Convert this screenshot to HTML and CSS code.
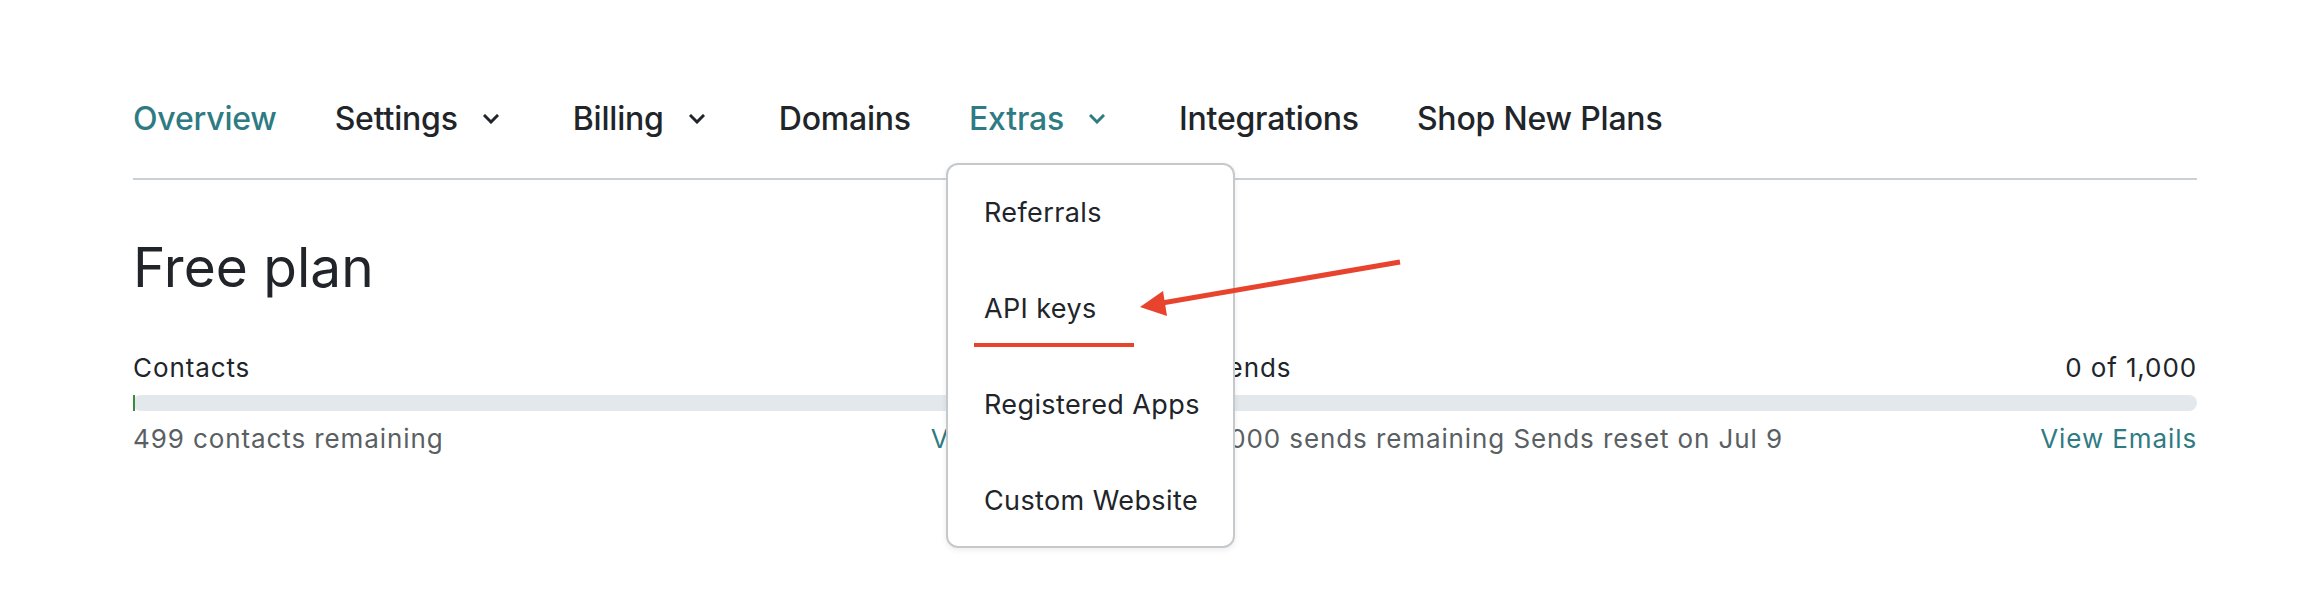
FILE: index.html
```html
<!DOCTYPE html>
<html lang="en">
<head>
<meta charset="utf-8">
<title>Account overview</title>
<link rel="stylesheet" href="styles.css">
</head>
<body>
<div class="page">
  <nav class="tabs">
    <a class="tab active">Overview</a>
    <a class="tab has-menu">Settings
      <svg class="chev" viewBox="0 0 16 10" width="16" height="10"><polyline points="2,2 8,8 14,2"/></svg>
    </a>
    <a class="tab has-menu">Billing
      <svg class="chev" viewBox="0 0 16 10" width="16" height="10"><polyline points="2,2 8,8 14,2"/></svg>
    </a>
    <a class="tab">Domains</a>
    <div class="tab has-menu active open">Extras
      <svg class="chev" viewBox="0 0 16 10" width="16" height="10"><polyline points="2,2 8,8 14,2"/></svg>
      <ul class="menu">
        <li class="menu-item">Referrals</li>
        <li class="menu-item">API keys<span class="mark"></span></li>
        <li class="menu-item">Registered Apps</li>
        <li class="menu-item">Custom Website</li>
      </ul>
    </div>
    <a class="tab">Integrations</a>
    <a class="tab">Shop New Plans</a>
  </nav>

  <h1 class="plan">Free plan</h1>

  <div class="stats">
    <section class="stat">
      <div class="stat-head"><span>Contacts</span><span>1 of 500</span></div>
      <div class="bar"><div class="fill"></div></div>
      <div class="stat-foot"><span class="muted">499 contacts remaining</span><a class="link">View Contacts</a></div>
    </section>
    <section class="stat">
      <div class="stat-head"><span>Sends</span><span>0 of 1,000</span></div>
      <div class="bar"></div>
      <div class="stat-foot"><span class="muted">1,000 sends remaining Sends reset on Jul 9</span><a class="link">View Emails</a></div>
    </section>
  </div>

  <svg class="arrow" viewBox="0 0 280 75" width="280" height="75">
    <line x1="270" y1="12" x2="32" y2="53"/>
    <polygon points="10,57 33,41 37,66"/>
  </svg>
</div>
</body>
</html>
```
FILE: styles.css
```css
html, body {
  margin: 0;
  padding: 0;
  background: #ffffff;
}

body {
  font-family: Inter, "Noto Sans", "Liberation Sans", sans-serif;
  color: #21252a;
}

.page {
  position: relative;
  width: 2320px;
  height: 614px;
  padding: 0 123px 0 133px;
  box-sizing: border-box;
  overflow: hidden;
}

.tabs {
  display: flex;
  align-items: center;
  gap: 58px;
  padding: 99px 0 39px;
  border-bottom: 2px solid #c8d1d8;
}

.tab {
  position: relative;
  display: flex;
  align-items: center;
  font-size: 32px;
  line-height: 40px;
  font-weight: 500;
  color: #21252a;
  letter-spacing: -0.2px;
}

.tab.active {
  color: #2f7b83;
}

.chev {
  margin-left: 25px;
  margin-right: 16px;
  fill: none;
  stroke: currentColor;
  stroke-width: 3;
  stroke-linecap: square;
}

.menu {
  position: absolute;
  top: 64px;
  left: -23px;
  width: 289px;
  height: 385px;
  margin: 0;
  padding: 0;
  list-style: none;
  background: #ffffff;
  border: 2px solid #c6c9cc;
  border-radius: 12px;
  box-shadow: 0 2px 6px rgba(0, 0, 0, 0.08);
  box-sizing: border-box;
  z-index: 5;
}

.menu-item {
  position: relative;
  padding-left: 36px;
  font-size: 27px;
  line-height: 96px;
  height: 96px;
  font-weight: 400;
  color: #21252a;
  letter-spacing: 0.4px;
}

.mark {
  position: absolute;
  left: 26px;
  top: 82px;
  width: 160px;
  height: 4px;
  background: #e8432d;
}

.plan {
  margin: 55px 0 0;
  font-size: 55px;
  line-height: 64px;
  font-weight: 400;
  color: #21252a;
}

.stats {
  display: grid;
  grid-template-columns: 1fr 1fr;
  gap: 90px;
  margin-top: 53px;
}

.stat-head,
.stat-foot {
  display: flex;
  justify-content: space-between;
  font-size: 26px;
  line-height: 32px;
  letter-spacing: 0.9px;
}

.bar {
  position: relative;
  height: 16px;
  margin: 11px 0 12px;
  background: #e3e8ec;
  border-radius: 8px;
}

.fill {
  position: absolute;
  left: 0;
  top: 0;
  width: 2px;
  height: 16px;
  background: #3b8a3e;
}

.muted {
  color: #5a5f64;
}

.link {
  color: #2f7b83;
}

.arrow {
  position: absolute;
  left: 1130px;
  top: 250px;
  z-index: 6;
}

.arrow line {
  stroke: #e8432d;
  stroke-width: 5;
}

.arrow polygon {
  fill: #e8432d;
}
```
